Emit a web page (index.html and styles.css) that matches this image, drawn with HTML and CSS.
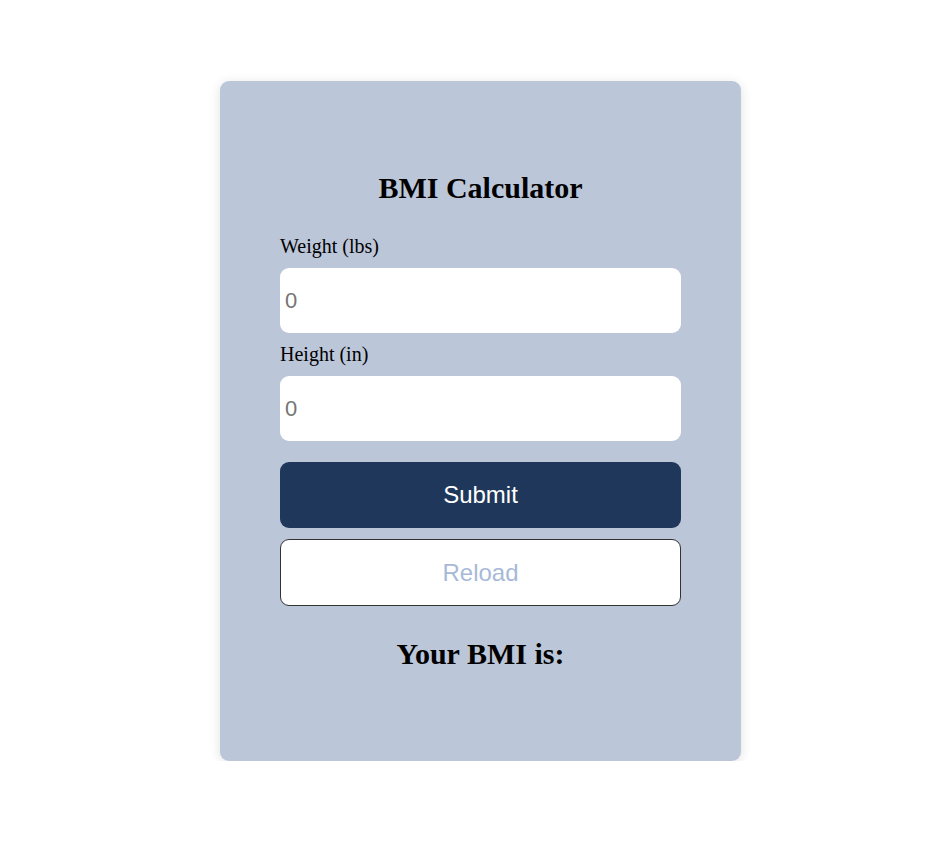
FILE: index.html
```html
<!DOCTYPE html>
<html>
<head>
<meta charset="utf-8">
<link rel="stylesheet" href="styles.css">
</head>
<body>
<div class="card">
  <h1 class="title">BMI Calculator</h1>
  <form class="form">
    <label class="label" for="w">Weight (lbs)</label>
    <input class="field" id="w" type="text" placeholder="0">
    <label class="label label-second" for="h">Height (in)</label>
    <input class="field" id="h" type="text" placeholder="0">
    <button class="btn btn-submit" type="button">Submit</button>
    <button class="btn btn-reload" type="button">Reload</button>
  </form>
  <h2 class="result">Your BMI is:</h2>
</div>
</body>
</html>
```
FILE: styles.css
```css
html, body {
  margin: 0;
  padding: 0;
  background: #ffffff;
}
body {
  font-family: "Liberation Serif", "Times New Roman", serif;
  color: #000;
  padding-top: 81px;
}
.card {
  box-sizing: border-box;
  width: 521px;
  margin: 0 0 0 220px;
  background: #bcc6d9;
  border-radius: 9px;
  padding: 90px 60px 90px;
  box-shadow: 0 2px 12px rgba(0, 0, 0, 0.12);
}
.title {
  margin: 0;
  font-size: 30px;
  line-height: 34px;
  font-weight: bold;
  text-align: center;
}
.form {
  display: flex;
  flex-direction: column;
  margin-top: 30px;
}
.label {
  font-size: 20px;
  line-height: 22px;
}
.label-second {
  margin-top: 10px;
}
.field {
  box-sizing: border-box;
  margin-top: 11px;
  height: 65px;
  width: 100%;
  border: none;
  border-radius: 9px;
  background: #fff;
  padding: 0 5px;
  font-family: "Liberation Sans", Arial, sans-serif;
  font-size: 22px;
  outline: none;
}
.field::placeholder {
  color: #757575;
}
.btn {
  box-sizing: border-box;
  width: 100%;
  border-radius: 9px;
  font-family: "Liberation Sans", Arial, sans-serif;
  font-size: 24px;
  cursor: pointer;
}
.btn-submit {
  margin-top: 21px;
  height: 66px;
  background: #1e375a;
  color: #ffffff;
  border: none;
}
.btn-reload {
  margin-top: 11px;
  height: 67px;
  background: #ffffff;
  color: #a8b9d8;
  border: 1px solid #333;
}
.result {
  margin: 31px 0 0;
  font-size: 30px;
  line-height: 34px;
  font-weight: bold;
  text-align: center;
}
```
